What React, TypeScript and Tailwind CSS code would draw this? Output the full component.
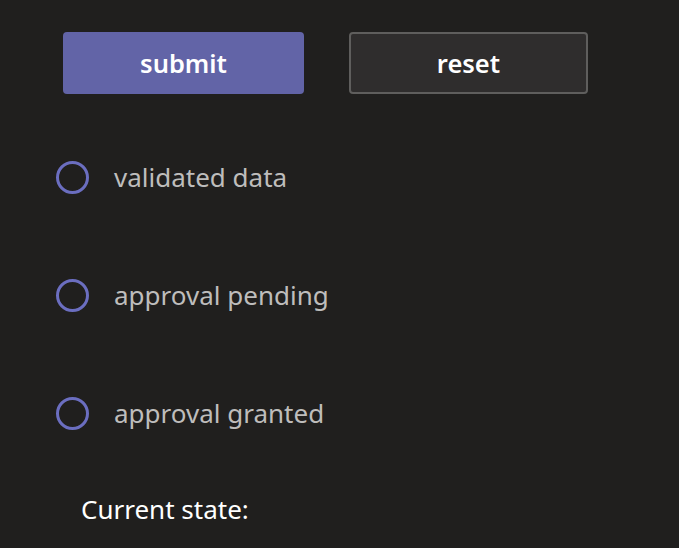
export default function App() {
  const states = ["validated data", "approval pending", "approval granted"];

  return (
    <div
      className="h-[548px] w-[679px] overflow-hidden bg-[#201f1e] pl-[56px] pt-[32px]"
      style={{ fontFamily: '"Noto Sans", "Open Sans", sans-serif' }}
    >
      <div className="ml-[7px] flex gap-[45px]">
        <button className="h-[62px] w-[241px] rounded-[4px] bg-[#6264a7] text-[25.5px] font-semibold text-white">
          submit
        </button>
        <button className="h-[62px] w-[239px] rounded-[4px] border-2 border-[#5f5e5d] bg-[#2f2d2d] text-[25.5px] font-semibold text-white">
          reset
        </button>
      </div>

      <div className="mt-[67px] flex flex-col gap-[85px]">
        {states.map((s) => (
          <label key={s} className="flex h-[33px] items-center">
            <span className="h-[33px] w-[33px] rounded-full border-[3px] border-[#6b6ec0]" />
            <span className="ml-[25px] text-[26px] text-[#bebdbc]">{s}</span>
          </label>
        ))}
      </div>

      <p className="ml-[25px] mt-[61px] text-[26px] leading-[36px] text-white">Current state:</p>
    </div>
  );
}
